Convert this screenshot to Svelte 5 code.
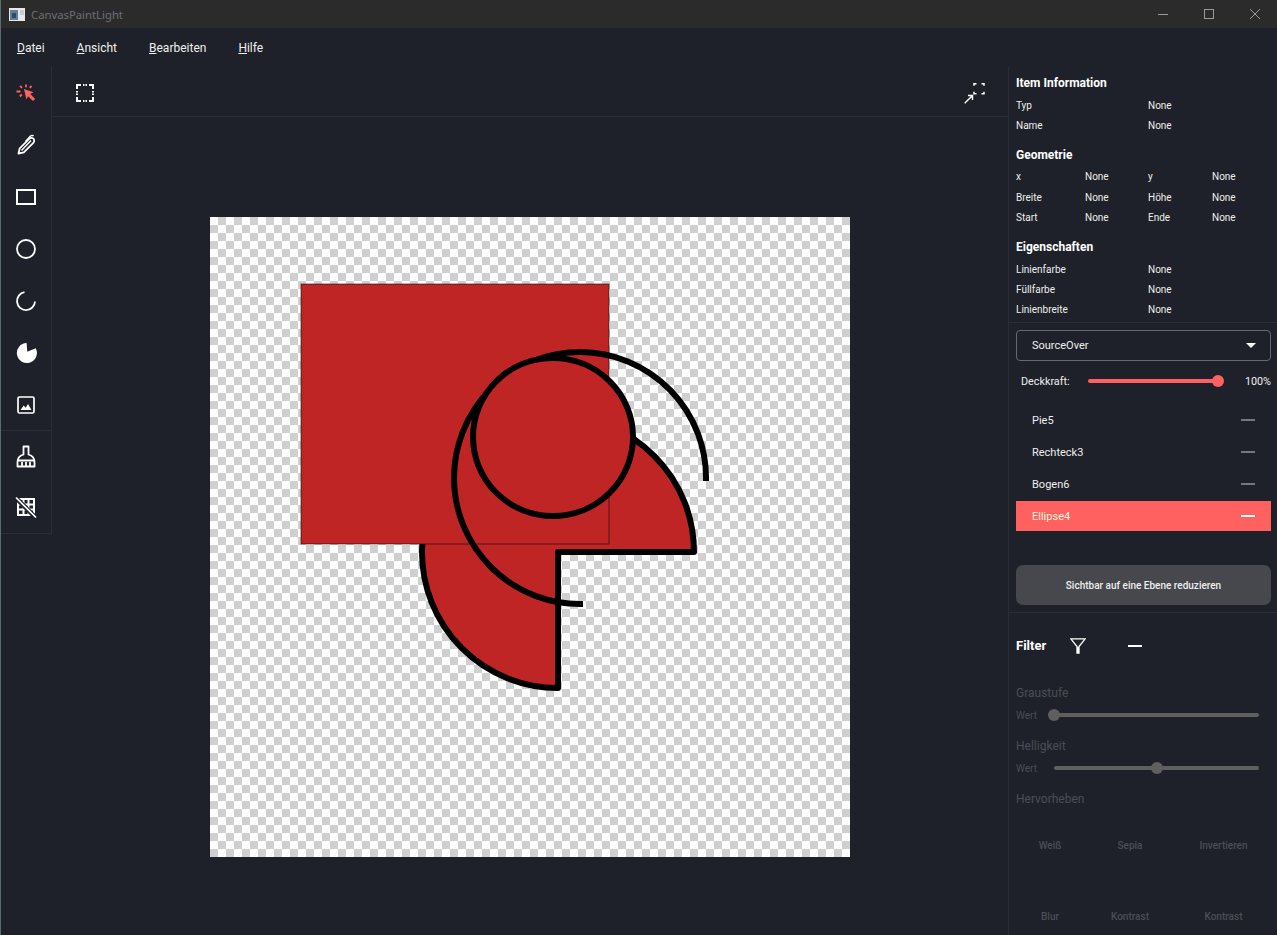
<script>
  const menus = [
    { key: 'D', rest: 'atei' },
    { key: 'A', rest: 'nsicht' },
    { key: 'B', rest: 'earbeiten' },
    { key: 'H', rest: 'ilfe' }
  ];

  const info = [['Typ', 'None'], ['Name', 'None']];
  const geometry = [
    ['x', 'None', 'y', 'None'],
    ['Breite', 'None', 'Höhe', 'None'],
    ['Start', 'None', 'Ende', 'None']
  ];
  const props = [['Linienfarbe', 'None'], ['Füllfarbe', 'None'], ['Linienbreite', 'None']];

  const layers = [
    { name: 'Pie5', selected: false },
    { name: 'Rechteck3', selected: false },
    { name: 'Bogen6', selected: false },
    { name: 'Ellipse4', selected: true }
  ];

  const filters = [
    { label: 'Graustufe', value: 0 },
    { label: 'Helligkeit', value: 50 }
  ];

  const effects = ['Weiß', 'Sepia', 'Invertieren', 'Blur', 'Kontrast', 'Kontrast'];
  const opacity = 100;
</script>

<div class="window">
  <header class="titlebar">
    <svg class="app-icon" width="16" height="13" viewBox="0 0 16 13">
      <rect width="16" height="13" fill="#e8e8e8" />
      <rect x="1" y="2" width="8" height="10" fill="#5f7f9c" />
      <rect x="3" y="5" width="4" height="5" fill="#34495e" />
      <rect x="11" y="2" width="4" height="5" fill="#c5ccd3" />
    </svg>
    <span class="app-title">CanvasPaintLight</span>
    <div class="win-controls">
      <svg width="10" height="10" viewBox="0 0 10 10"><path d="M0 5.500h10" stroke="#9a9a9a" /></svg>
      <svg width="10" height="10" viewBox="0 0 10 10"><rect x=".5" y=".5" width="9" height="9" fill="none" stroke="#9a9a9a" /></svg>
      <svg width="10" height="10" viewBox="0 0 10 10"><path d="M0 0l10 10M10 0L0 10" stroke="#9a9a9a" /></svg>
    </div>
  </header>

  <nav class="menubar">
    {#each menus as m}
      <span class="menu"><u>{m.key}</u>{m.rest}</span>
    {/each}
  </nav>

  <div class="main">
    <aside class="tools">
      <div class="tool-group">
        <div class="tool">
          <svg width="24" height="24" viewBox="0 0 24 24">
            <path d="M10 8l9.500 3.300-3.200 1.700 4.900 4.900-2.200 2.200-4.900-4.900-1.700 3.200z" fill="#ff6161" />
            <path d="M2.500 10.500h4M12 3.500v2.800M6 4.800l2 2M5.800 15.500l2-2M17.500 4.800l-1.700 2" stroke="#ff6161" stroke-width="1.800" fill="none" />
          </svg>
        </div>
        <div class="tool">
          <svg width="24" height="24" viewBox="0 0 24 24" fill="none" stroke="#fff" stroke-width="1.800">
            <path d="M4.500 20.500l1.200-5.200L15.200 5.800c1.100-1.100 3.100-1.200 4.200-.1s1 3-.1 4.100L9.800 19.300z" stroke-linejoin="round" />
            <path d="M7.500 17.500l9.500-10" stroke-width="1.500" />
            <path d="M11.500 8.500l5-5.500c1-.8 2.500-.6 3 .2" stroke-width="1.500" />
          </svg>
        </div>
        <div class="tool">
          <svg width="24" height="24" viewBox="0 0 24 24"><rect x="3" y="5" width="18" height="14" fill="none" stroke="#fff" stroke-width="2" /></svg>
        </div>
        <div class="tool">
          <svg width="24" height="24" viewBox="0 0 24 24"><circle cx="12" cy="12" r="9" fill="none" stroke="#fff" stroke-width="1.800" /></svg>
        </div>
        <div class="tool">
          <svg width="24" height="24" viewBox="0 0 24 24"><path d="M10.500 3.200A9 9 0 1 0 21 12.500" fill="none" stroke="#fff" stroke-width="1.800" /></svg>
        </div>
        <div class="tool">
          <svg width="24" height="24" viewBox="0 0 24 24"><path d="M12.600 2A10 10 0 1 0 21.700 7.300L13.300 10.700z" fill="#fff" /></svg>
        </div>
        <div class="tool">
          <svg width="24" height="24" viewBox="0 0 24 24">
            <rect x="4" y="4" width="16" height="16" rx="1.500" fill="none" stroke="#fff" stroke-width="1.700" />
            <path d="M6.500 17l3.200-4.500 2 2.300 2.300-3.800 3.500 6z" fill="#fff" />
          </svg>
        </div>
      </div>
      <div class="tool-group last">
        <div class="tool">
          <svg width="24" height="24" viewBox="0 0 24 24" fill="none" stroke="#fff" stroke-width="1.800">
            <path d="M3.500 21.500V17c0-4 2.500-6.500 6-7.500V1.500h5v8c3.500 1 6 3.500 6 7.500v4.500z" stroke-linejoin="round" />
            <path d="M3.500 15.500h17M8 17v4.500M12 17v4.500M16 17v4.500" />
          </svg>
        </div>
        <div class="tool">
          <svg width="24" height="24" viewBox="0 0 24 24">
            <rect x="4" y="3" width="16" height="16" fill="none" stroke="#fff" stroke-width="2" />
            <path d="M4 8.500h16M4 13.500h16M9.500 3v16M14.500 3v16" stroke="#fff" stroke-width="2" />
            <path d="M1 1l22 22" stroke="#1e2129" stroke-width="4.500" />
            <path d="M2 1.500l20 20" stroke="#fff" stroke-width="1.700" />
          </svg>
        </div>
      </div>
    </aside>

    <section class="center">
      <div class="toolbar">
        <svg width="18" height="18" viewBox="0 0 18 18" fill="none" stroke="#fff" stroke-width="2">
          <path d="M1 5V1h4M13 1h4v4M17 13v4h-4M5 17H1v-4" />
          <path d="M7 1h1.500M9.500 1H11M1 7v1.500M1 9.500V11M17 7v1.500M17 9.500V11M7 17h1.500M9.500 17H11" />
        </svg>
        <svg width="21" height="21" viewBox="0 0 21 21" fill="none" stroke="#fff" stroke-width="1.500">
          <path d="M10 2.800V.8h2.500M17.500 .8H20v2M20 8.700v2h-2.500M12.500 10.700H10v-2" />
          <path d="M.7 20.300L8.500 12.500M4 12.500h4.500V17" />
        </svg>
      </div>

      <div class="viewport">
        <div class="canvas">
          <svg width="640" height="640" viewBox="210 217 640 640">
            <path d="M558 552V688A136 136 0 1 1 694 552H558Z" fill="#c02525" stroke="#000" stroke-width="6" stroke-linejoin="round" />
            <rect x="301" y="284" width="308" height="260" fill="#c02525" stroke="#000" stroke-opacity=".55" />
            <path d="M706 481A126 126 0 1 0 583 604" fill="none" stroke="#000" stroke-width="6" />
            <ellipse cx="553" cy="437" rx="80" ry="79" fill="#c02525" stroke="#000" stroke-width="6" />
          </svg>
        </div>
      </div>
    </section>

    <aside class="side">
      <div class="props">
        <h3>Item Information</h3>
        {#each info as row}
          <div class="row two"><span>{row[0]}</span><span>{row[1]}</span></div>
        {/each}
        <h3 class="tight">Geometrie</h3>
        {#each geometry as row, i}
          <div class="row four" class:spaced={i === 0}>
            {#each row as cell}<span>{cell}</span>{/each}
          </div>
        {/each}
        <h3>Eigenschaften</h3>
        {#each props as row}
          <div class="row two"><span>{row[0]}</span><span>{row[1]}</span></div>
        {/each}
      </div>

      <div class="layers">
        <div class="select">
          <span>SourceOver</span>
          <svg width="10" height="5" viewBox="0 0 10 5"><path d="M0 0h10L5 5z" fill="#fff" /></svg>
        </div>
        <div class="opacity">
          <span class="opacity-label">Deckkraft:</span>
          <div class="slider active">
            <div class="thumb" style="left: {opacity}%"></div>
          </div>
          <span class="opacity-value">{opacity}%</span>
        </div>
        <ul class="layer-list">
          {#each layers as layer}
            <li class:selected={layer.selected}>
              <span>{layer.name}</span>
              <i class="dash"></i>
            </li>
          {/each}
        </ul>
        <button class="flatten">Sichtbar auf eine Ebene reduzieren</button>
      </div>

      <div class="filter">
        <div class="filter-head">
          <h3>Filter</h3>
          <svg width="16" height="16" viewBox="0 0 16 16" fill="none" stroke="#fff">
            <path d="M.8 .8h14.400L9 8.500v6.500H7V8.500z" stroke-width="1.300" />
            <path d="M8 9v6" stroke-width="2" />
          </svg>
          <i class="filter-dash"></i>
        </div>
        {#each filters as f}
          <div class="filter-label">{f.label}</div>
          <div class="filter-row">
            <span>Wert</span>
            <div class="slider">
              <div class="thumb" style="left: {f.value}%"></div>
            </div>
          </div>
        {/each}
        <div class="filter-label">Hervorheben</div>
        <div class="effects">
          {#each effects as e}
            <span>{e}</span>
          {/each}
        </div>
      </div>
    </aside>
  </div>
</div>

<style>
  :global(body) {
    background: #1e2129;
  }
  .window {
    width: 1277px;
    height: 935px;
    display: flex;
    flex-direction: column;
    overflow: hidden;
    background: #1e2129;
    color: #fff;
    font-family: Roboto, sans-serif;
    border-left: 1px solid #5d6b6b;
    box-sizing: border-box;
  }
  .titlebar {
    height: 28px;
    flex: none;
    display: flex;
    align-items: center;
    background: #2b2b2b;
    padding-left: 8px;
  }
  .app-icon {
    margin-right: 6px;
  }
  .app-title {
    font-family: "Noto Sans", sans-serif;
    font-size: 11.3px;
    color: #6e6e78;
  }
  .win-controls {
    margin-left: auto;
    display: flex;
    gap: 36px;
    padding-right: 17px;
  }
  .menubar {
    height: 39px;
    flex: none;
    display: flex;
    align-items: center;
    padding-left: 16px;
    gap: 32px;
    font-size: 12px;
    color: #f0f0f0;
  }
  .main {
    flex: 1;
    display: flex;
    min-height: 0;
  }
  .tools {
    width: 51px;
    flex: none;
  }
  .tool-group {
    border-right: 1px solid #2a2d35;
    border-bottom: 1px solid #2a2d35;
  }
  .tool {
    height: 52px;
    display: flex;
    align-items: center;
    justify-content: center;
  }
  .tool-group:first-child .tool:last-child {
    height: 51px;
  }
  .tool-group.last .tool {
    height: 51px;
  }
  .center {
    flex: 1;
    display: flex;
    flex-direction: column;
    min-width: 0;
  }
  .toolbar {
    height: 50px;
    flex: none;
    box-sizing: border-box;
    display: flex;
    align-items: center;
    justify-content: space-between;
    padding: 3px 23px 0 24px;
    border-bottom: 1px solid #2a2d35;
  }
  .viewport {
    flex: 1;
    display: flex;
    justify-content: center;
    align-items: flex-start;
    padding-top: 100px;
  }
  .canvas {
    width: 640px;
    height: 640px;
    background-color: #fff;
    background-image: conic-gradient(#d0d0d0 25%, #fff 0 50%, #d0d0d0 0 75%, #fff 0);
    background-size: 16px 16px;
  }
  .canvas svg {
    display: block;
  }
  .side {
    width: 269px;
    flex: none;
    box-sizing: border-box;
    border-left: 1px solid #2a2d35;
    font-size: 10px;
  }
  .side h3 {
    margin: 0;
    font-size: 12px;
    font-weight: 700;
    line-height: 20px;
    color: #fff;
  }
  .props {
    padding: 6px 6px 3px 7px;
    border-bottom: 1px solid #2a2d35;
  }
  .props h3 {
    margin-bottom: 2px;
  }
  .props .row + h3 {
    margin-top: 10px;
  }
  .props h3.tight {
    margin-bottom: 1px;
  }
  .row {
    display: grid;
    height: 20px;
    align-items: center;
    color: #eee;
  }
  .row.spaced {
    margin-bottom: 1px;
  }
  .row.two {
    grid-template-columns: 132px 1fr;
  }
  .row.four {
    grid-template-columns: 69px 63px 64px 1fr;
  }
  .layers {
    padding: 7px 6px 7px 7px;
    border-bottom: 1px solid #2a2d35;
  }
  .select {
    height: 31px;
    box-sizing: border-box;
    border: 1px solid #666a70;
    border-radius: 4px;
    display: flex;
    align-items: center;
    justify-content: space-between;
    padding: 0 14px 0 15px;
    font-size: 11px;
    color: #f0f0f0;
  }
  .opacity {
    height: 20px;
    margin-top: 10px;
    display: flex;
    align-items: center;
    font-size: 10.800px;
    color: #eee;
  }
  .opacity-label {
    width: 67px;
    margin-left: 5px;
    flex: none;
  }
  .opacity-value {
    margin-left: auto;
  }
  .slider {
    position: relative;
    height: 4px;
    border-radius: 2px;
    background: #5f5f5f;
    flex: 1;
  }
  .slider.active {
    flex: none;
    width: 130px;
    background: #ff6161;
  }
  .thumb {
    position: absolute;
    top: -4px;
    width: 12px;
    height: 12px;
    margin-left: -6px;
    border-radius: 50%;
    background: #5f5f5f;
  }
  .slider.active .thumb {
    background: #ff6161;
  }
  .layer-list {
    list-style: none;
    margin: 14px 0 0;
    padding: 0;
    font-size: 11px;
    display: flex;
    flex-direction: column;
    gap: 2px;
  }
  .layer-list li {
    height: 30px;
    display: flex;
    align-items: center;
    justify-content: space-between;
    padding: 0 16px;
    color: #eee;
  }
  .layer-list li.selected {
    background: #ff6161;
    color: #fff6dc;
  }
  .dash {
    width: 14px;
    height: 2px;
    background: #777;
  }
  .selected .dash {
    background: #fff;
  }
  .flatten {
    display: block;
    width: 100%;
    height: 40px;
    margin-top: 34px;
    border: 0;
    border-radius: 7px;
    background: #46484d;
    color: #eee;
    font-family: inherit;
    font-size: 10px;
    font-weight: 500;
  }
  .filter {
    padding: 17px 18px 0 7px;
  }
  .filter-head {
    display: flex;
    align-items: center;
    height: 32px;
    margin-bottom: 20px;
  }
  .filter-head h3 {
    width: 54px;
    font-size: 13px;
  }
  .filter-dash {
    width: 14px;
    height: 2px;
    margin-left: 42px;
    background: #fff;
  }
  .filter-label {
    height: 20px;
    line-height: 22px;
    font-size: 12px;
    color: #4b4e56;
  }
  .filter-row {
    display: flex;
    align-items: center;
    height: 20px;
    margin: 3px 0 10px;
    color: #4b4e56;
  }
  .filter-row span {
    width: 38px;
    flex: none;
  }
  .effects {
    display: grid;
    grid-template-columns: 68px 92px 95px;
    grid-auto-rows: 71px;
    margin: 28px -6px 0 0;
    font-weight: 500;
    color: #4b4e56;
    text-align: center;
    line-height: 20px;
  }
</style>
